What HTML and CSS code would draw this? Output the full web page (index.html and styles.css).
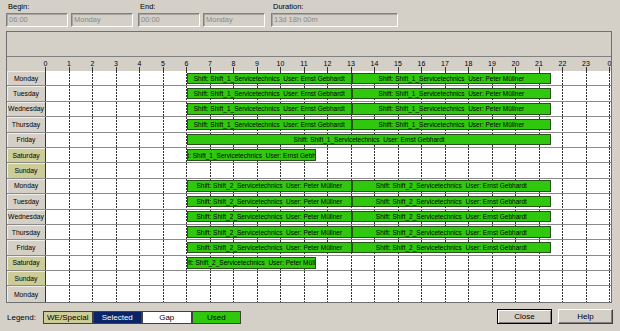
FILE: index.html
```html
<!DOCTYPE html>
<html lang="en">
<head>
  <meta charset="UTF-8">
  <meta name="viewport" content="width=device-width, initial-scale=1.0">
  <title>Shift overview</title>
  <link rel="stylesheet" href="styles.css">
</head>
<body>
  <div class="dialog">
    <!-- Begin / End / Duration -->
    <div class="fields">
      <div class="field">
        <label>Begin:</label>
        <div class="pair">
          <div class="input">06:00</div>
          <div class="input">Monday</div>
        </div>
      </div>
      <div class="field end">
        <label>End:</label>
        <div class="pair">
          <div class="input">00:00</div>
          <div class="input">Monday</div>
        </div>
      </div>
      <div class="field duration">
        <label>Duration:</label>
        <div class="pair">
          <div class="input wide">13d 18h 00m</div>
        </div>
      </div>
    </div>

    <!-- Timeline -->
    <div class="panel">
      <div class="panel-top"></div>
      <div class="hours">
        <div class="hour-labels">
          <span>0</span><span>1</span><span>2</span><span>3</span><span>4</span>
          <span>5</span><span>6</span><span>7</span><span>8</span><span>9</span>
          <span>10</span><span>11</span><span>12</span><span>13</span><span>14</span>
          <span>15</span><span>16</span><span>17</span><span>18</span><span>19</span>
          <span>20</span><span>21</span><span>22</span><span>23</span><span>0</span>
        </div>
      </div>

      <div class="row">
        <div class="day">Monday</div>
        <div class="track">
          <div class="bar early">Shift: Shift_1_Servicetechnics&nbsp; User: Ernst Gebhardt</div>
          <div class="bar late">Shift: Shift_1_Servicetechnics&nbsp; User: Peter Müllner</div>
        </div>
      </div>
      <div class="row">
        <div class="day">Tuesday</div>
        <div class="track">
          <div class="bar early">Shift: Shift_1_Servicetechnics&nbsp; User: Ernst Gebhardt</div>
          <div class="bar late">Shift: Shift_1_Servicetechnics&nbsp; User: Peter Müllner</div>
        </div>
      </div>
      <div class="row">
        <div class="day">Wednesday</div>
        <div class="track">
          <div class="bar early">Shift: Shift_1_Servicetechnics&nbsp; User: Ernst Gebhardt</div>
          <div class="bar late">Shift: Shift_1_Servicetechnics&nbsp; User: Peter Müllner</div>
        </div>
      </div>
      <div class="row">
        <div class="day">Thursday</div>
        <div class="track">
          <div class="bar early">Shift: Shift_1_Servicetechnics&nbsp; User: Ernst Gebhardt</div>
          <div class="bar late">Shift: Shift_1_Servicetechnics&nbsp; User: Peter Müllner</div>
        </div>
      </div>
      <div class="row">
        <div class="day">Friday</div>
        <div class="track">
          <div class="bar full">Shift: Shift_1_Servicetechnics&nbsp; User: Ernst Gebhardt</div>
        </div>
      </div>
      <div class="row we">
        <div class="day">Saturday</div>
        <div class="track">
          <div class="bar half">Shift: Shift_1_Servicetechnics&nbsp; User: Ernst Gebhardt</div>
        </div>
      </div>
      <div class="row we">
        <div class="day">Sunday</div>
        <div class="track"></div>
      </div>

      <div class="row">
        <div class="day">Monday</div>
        <div class="track">
          <div class="bar early">Shift: Shift_2_Servicetechnics&nbsp; User: Peter Müllner</div>
          <div class="bar late">Shift: Shift_2_Servicetechnics&nbsp; User: Ernst Gebhardt</div>
        </div>
      </div>
      <div class="row">
        <div class="day">Tuesday</div>
        <div class="track">
          <div class="bar early">Shift: Shift_2_Servicetechnics&nbsp; User: Peter Müllner</div>
          <div class="bar late">Shift: Shift_2_Servicetechnics&nbsp; User: Ernst Gebhardt</div>
        </div>
      </div>
      <div class="row">
        <div class="day">Wednesday</div>
        <div class="track">
          <div class="bar early">Shift: Shift_2_Servicetechnics&nbsp; User: Peter Müllner</div>
          <div class="bar late">Shift: Shift_2_Servicetechnics&nbsp; User: Ernst Gebhardt</div>
        </div>
      </div>
      <div class="row">
        <div class="day">Thursday</div>
        <div class="track">
          <div class="bar early">Shift: Shift_2_Servicetechnics&nbsp; User: Peter Müllner</div>
          <div class="bar late">Shift: Shift_2_Servicetechnics&nbsp; User: Ernst Gebhardt</div>
        </div>
      </div>
      <div class="row">
        <div class="day">Friday</div>
        <div class="track">
          <div class="bar early">Shift: Shift_2_Servicetechnics&nbsp; User: Peter Müllner</div>
          <div class="bar late">Shift: Shift_2_Servicetechnics&nbsp; User: Ernst Gebhardt</div>
        </div>
      </div>
      <div class="row we">
        <div class="day">Saturday</div>
        <div class="track">
          <div class="bar half">Shift: Shift_2_Servicetechnics&nbsp; User: Peter Müllner</div>
        </div>
      </div>
      <div class="row we">
        <div class="day">Sunday</div>
        <div class="track"></div>
      </div>
      <div class="row">
        <div class="day">Monday</div>
        <div class="track"></div>
      </div>
    </div>

    <!-- Legend and buttons -->
    <div class="footer">
      <span class="legend-label">Legend:</span>
      <div class="legend">
        <div class="key key-we">WE/Special</div>
        <div class="key key-selected">Selected</div>
        <div class="key key-gap">Gap</div>
        <div class="key key-used">Used</div>
      </div>
      <div class="buttons">
        <button class="btn default">Close</button>
        <button class="btn">Help</button>
      </div>
    </div>
  </div>
</body>
</html>
```

FILE: styles.css
```css
/* General */
body {
  margin: 0;
  background: #d4d0c8;
  font-family: "Liberation Sans", Arial, sans-serif;
  color: #000;
}

.dialog {
  width: 620px;
  height: 331px;
  box-sizing: border-box;
  padding: 2px 7px 0 6px;
  overflow: hidden;
}

/* Begin / End / Duration */
.fields {
  display: flex;
}

.field label {
  display: block;
  font-size: 7.5px;
  line-height: 10px;
  padding-left: 2px;
}

.field.end {
  margin-left: 5px;
}

.field.duration {
  margin-left: 6px;
}

.pair {
  display: flex;
  gap: 3px;
  margin-top: 1px;
}

.input {
  width: 62px;
  height: 14px;
  box-sizing: border-box;
  border: 1px solid;
  border-color: #808080 #fff #fff #808080;
  box-shadow: inset 1px 1px 0 #a8a6a0;
  padding-left: 2px;
  font-size: 7.5px;
  line-height: 12px;
  color: #8a8a8a;
}

.input.wide {
  width: 127px;
}

/* Timeline panel */
.panel {
  width: 606px;
  box-sizing: border-box;
  margin-top: 4px;
  border: 1px solid #707070;
  overflow: hidden;
}

.panel-top {
  height: 24px;
  border-bottom: 1px solid #808080;
}

.hours {
  height: 14px;
  background:
    linear-gradient(#333, #333) 38px 100% / 1px 4px no-repeat,
    repeating-linear-gradient(90deg, transparent 0 22.5px, #333 22.5px 23.5px) 39px 100% / 564px 4px no-repeat;
}

.hour-labels {
  display: flex;
  margin-left: 26.75px;
}

.hour-labels span {
  flex: 0 0 23.5px;
  text-align: center;
  font-size: 7px;
  line-height: 9px;
  padding-top: 2px;
}

.row {
  display: flex;
  height: 15.4px;
  box-sizing: border-box;
  border-bottom: 1px solid #8a8a8a;
}

.row:last-child {
  border-bottom: none;
}

.day {
  width: 38px;
  flex: none;
  border-right: 1px solid #333;
  box-shadow: inset 1px 1px 0 #f0eee8;
  display: flex;
  align-items: center;
  justify-content: center;
  font-size: 6.8px;
}

.row.we .day {
  background: #cccc99;
}

/* 48 half-hour columns, dashed line every hour */
.track {
  flex: 1;
  display: grid;
  grid-template-columns: repeat(48, 11.75px);
  background:
    repeating-linear-gradient(180deg, transparent 0 2px, #fff 2px 3px),
    repeating-linear-gradient(90deg, transparent 0 22.5px, #333 22.5px 23.5px) #fff;
}

.bar {
  grid-row: 1;
  display: flex;
  align-items: center;
  justify-content: center;
  overflow: hidden;
  white-space: nowrap;
  margin: 1.5px 0;
  background: #2fc80c;
  border: 1px solid #27501a;
  font-size: 6.5px;
}

.early { grid-column: 13 / 27; }
.late { grid-column: 27 / 44; }
.full { grid-column: 13 / 44; }
.half { grid-column: 13 / 24; }

/* Legend and buttons */
.footer {
  display: flex;
  align-items: flex-end;
  height: 15px;
  margin-top: 6px;
}

.legend-label {
  width: 36px;
  margin-left: 1px;
  font-size: 8px;
  line-height: 13px;
}

.legend {
  display: flex;
}

.key {
  width: 49.5px;
  height: 13px;
  box-sizing: border-box;
  border: 1px solid #404040;
  text-align: center;
  font-size: 8px;
  line-height: 11px;
}

.key-we { background: #cccc99; }
.key-selected { background: #0a246a; color: #fff; }
.key-gap { background: #fff; }
.key-used { background: #2fc80c; }

.buttons {
  margin-left: auto;
  display: flex;
  gap: 6px;
}

.btn {
  width: 55px;
  height: 15px;
  box-sizing: border-box;
  padding: 0;
  background: #d4d0c8;
  border: 1px solid;
  border-color: #fff #404040 #404040 #fff;
  box-shadow: inset -1px -1px 0 #808080;
  font-family: inherit;
  font-size: 8px;
  color: #000;
}

.btn.default {
  border-color: #000;
  box-shadow: inset 1px 1px 0 #fff, inset -1px -1px 0 #808080;
}
```
